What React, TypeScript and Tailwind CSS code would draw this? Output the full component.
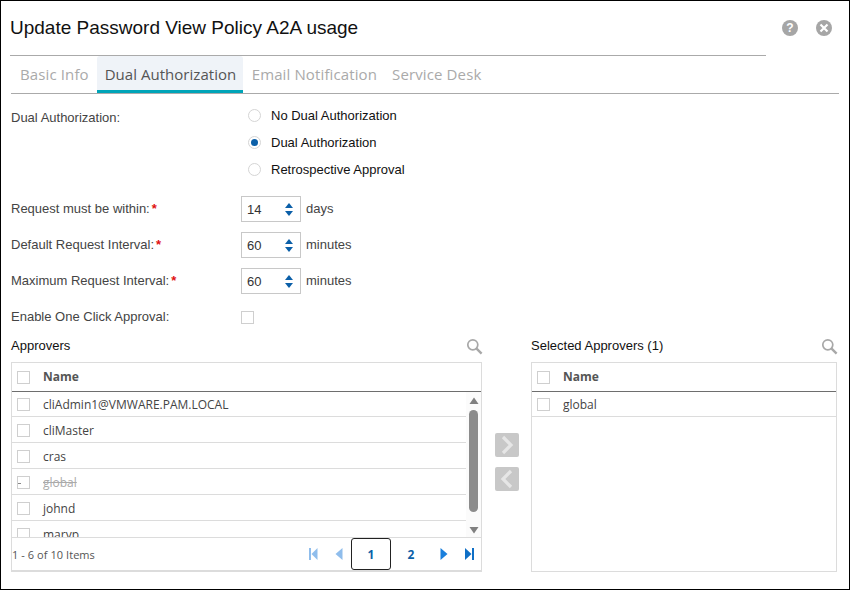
import React from "react";

const arial = "font-['Liberation_Sans',Arial,sans-serif]";
const open = "font-['Open_Sans',sans-serif]";

function Radio({ label, checked }: { label: string; checked?: boolean }) {
  return (
    <div className="flex h-[27px] items-center">
      <span className="flex h-[13px] w-[13px] items-center justify-center rounded-full border border-[#d5d5d5] bg-white">
        {checked && <span className="h-[7px] w-[7px] rounded-full bg-[#0b5fa8]" />}
      </span>
      <span className="ml-[10px] text-[13px] text-[#111]">{label}</span>
    </div>
  );
}

function Spinner({ value, unit }: { value: string; unit: string }) {
  return (
    <div className="flex items-center">
      <div className="flex h-[26px] w-[60px] items-center justify-between border border-[#c8c8c8] pl-[5px] pr-[7px] text-[13px] text-[#333]">
        <span className="pt-[1px]">{value}</span>
        <svg width="8" height="13" viewBox="0 0 8 13">
          <path d="M4 0 L8 5 H0 Z" fill="#0b5fa8" />
          <path d="M4 13 L8 8 H0 Z" fill="#0b5fa8" />
        </svg>
      </div>
      <span className="ml-[5px] text-[13px] text-[#444]">{unit}</span>
    </div>
  );
}

function Check() {
  return <span className="block h-[13px] w-[13px] shrink-0 border border-[#cfcfcf] bg-white" />;
}

function Search() {
  return (
    <svg className="-mr-px" width="17" height="17" viewBox="0 0 17 17" fill="none" stroke="#a8a8a8">
      <circle cx="6.8" cy="6.8" r="5" strokeWidth="1.7" />
      <path d="M10.6 10.6 L15.6 15.6" strokeWidth="2.4" />
    </svg>
  );
}

function FormRow({ label, required, children }: { label: string; required?: boolean; children: React.ReactNode }) {
  return (
    <div className="flex h-[26px] items-center">
      <div className="w-[230px] text-[13px] text-[#444]">
        {label}
        {required && <span className="ml-[2px] font-bold text-[#e01010]">*</span>}
      </div>
      {children}
    </div>
  );
}

function Row({ name, struck, clip, first }: { name: string; struck?: boolean; clip?: boolean; first?: boolean }) {
  const size = clip
    ? "h-[16px] items-start overflow-hidden pt-[7px]"
    : first
      ? "h-[25px] border-b border-[#dcdcdc] pt-[1px]"
      : "h-[26px] border-b border-[#dcdcdc] pt-[2px]";
  return (
    <div className={`flex items-center pl-[5px] ${size} ${open}`}>
      <div className="relative">
        <Check />
        {struck && <span className="absolute left-[1px] top-[7px] h-px w-[3px] bg-[#888]" />}
      </div>
      <span className={`ml-[13px] text-[12px] leading-[13px] ${struck ? "text-[#aaa] line-through" : "text-[#444]"}`}>{name}</span>
    </div>
  );
}

function Head() {
  return (
    <div className={`flex h-[29px] items-center border-b border-[#6e6e6e] pl-[5px] ${open}`}>
      <Check />
      <span className="ml-[13px] text-[12px] font-bold text-[#555]">Name</span>
    </div>
  );
}

function Pager() {
  return (
    <div className="flex items-center">
      <svg width="9" height="12" viewBox="0 0 9 12" fill="#8fbdec">
        <rect x="0" y="0" width="2" height="12" />
        <path d="M8.5 0 V12 L2.5 6 Z" />
      </svg>
      <svg className="ml-[17px]" width="8" height="12" viewBox="0 0 8 12" fill="#8fbdec">
        <path d="M7.5 0 V12 L0.5 6 Z" />
      </svg>
      <span className="ml-[8px] flex h-[32px] w-[40px] items-center justify-center rounded-[3px] border border-[#222] pt-[2px] text-[12px] font-bold text-[#0b5fa8]">1</span>
      <span className="flex h-[32px] w-[40px] items-center justify-center pt-[2px] text-[12px] font-bold text-[#0b5fa8]">2</span>
      <svg className="ml-[9px]" width="8" height="12" viewBox="0 0 8 12" fill="#1a7fdc">
        <path d="M0.5 0 V12 L7.5 6 Z" />
      </svg>
      <svg className="ml-[17px]" width="9" height="12" viewBox="0 0 9 12" fill="#0f6fc6">
        <path d="M0 0 V12 L6.5 6 Z" />
        <rect x="7" y="0" width="2" height="12" />
      </svg>
    </div>
  );
}

function MoveBtn({ dir }: { dir: "r" | "l" }) {
  return (
    <span className="flex h-[24px] w-[24px] items-center justify-center rounded-[2px] bg-[#c8c8c8]">
      <svg width="14" height="20" viewBox="0 0 14 20" fill="none" stroke="#e6e6e6" strokeWidth="3.2">
        <path d={dir === "r" ? "M3 2 L11 10 L3 18" : "M11 2 L3 10 L11 18"} />
      </svg>
    </span>
  );
}

export default function App() {
  return (
    <div className={`flex h-[590px] w-[850px] flex-col overflow-hidden border border-black bg-white ${arial}`}>
      <div className="flex h-[54px] items-center justify-between pl-[9px] pr-[17px]">
        <h1 className="text-[19px] text-[#111]">Update Password View Policy A2A usage</h1>
        <div className="flex items-center gap-[18px]">
          <span className="flex h-[16px] w-[16px] items-center justify-center rounded-full bg-[#a6a6a6] text-[12px] font-bold text-white">?</span>
          <span className="flex h-[16px] w-[16px] items-center justify-center rounded-full bg-[#a6a6a6]">
            <svg width="10" height="10" viewBox="0 0 10 10" stroke="#fff" strokeWidth="2.2">
              <path d="M1.5 1.5 L8.5 8.5 M8.5 1.5 L1.5 8.5" />
            </svg>
          </span>
        </div>
      </div>
      <div className="ml-[9px] h-px w-[756px] bg-[#aaaaaa]" />
      <div className={`ml-[10px] mr-[10px] flex h-[38px] items-stretch border-b border-[#aaaaaa] text-[15px] tracking-[0.12px] ${open}`}>
        <div className="flex items-center pl-[9px] pr-[8px] text-[#aaa]">Basic Info</div>
        <div className="flex w-[146px] items-center rounded-t-[3px] border-b-[3px] border-[#00a4b8] bg-[#eff3f8] pl-[8px] pt-[3px] tracking-[0.03px] text-[#555]">Dual Authorization</div>
        <div className="flex items-center pl-[9px] pr-[8px] text-[#aaa]">Email Notification</div>
        <div className="flex items-center px-[7px] text-[#aaa]">Service Desk</div>
      </div>

      <div className="flex flex-col pl-[10px] pr-[12px]">
        <div className="mt-[8px] flex">
          <div className="w-[237px] pt-[6px] text-[13px] text-[#444]">Dual Authorization:</div>
          <div className="flex flex-col">
            <Radio label="No Dual Authorization" />
            <Radio label="Dual Authorization" checked />
            <Radio label="Retrospective Approval" />
          </div>
        </div>
        <div className="mt-[13px] flex flex-col gap-[10px]">
          <FormRow label="Request must be within:" required><Spinner value="14" unit="days" /></FormRow>
          <FormRow label="Default Request Interval:" required><Spinner value="60" unit="minutes" /></FormRow>
          <FormRow label="Maximum Request Interval:" required><Spinner value="60" unit="minutes" /></FormRow>
        </div>
        <div className="mt-[10px]">
          <FormRow label="Enable One Click Approval:"><Check /></FormRow>
        </div>

        <div className="flex">
          <div className="flex w-[471px] flex-col">
            <div className="flex h-[32px] items-center justify-between">
              <span className="text-[13px] text-[#111]">Approvers</span>
              <Search />
            </div>
            <div className="flex h-[210px] flex-col border border-b-2 border-[#dcdcdc]">
              <Head />
              <div className="flex h-[145px]">
                <div className="flex-1">
                  <Row name="cliAdmin1@VMWARE.PAM.LOCAL" first />
                  <Row name="cliMaster" />
                  <Row name="cras" />
                  <Row name="global" struck />
                  <Row name="johnd" />
                  <Row name="maryp" clip />
                </div>
                <div className="flex w-[15px] flex-col items-center bg-[#fbfbfb] pt-[5px]">
                  <svg width="10" height="8" viewBox="0 0 10 8"><path d="M5 0.5 L9.5 7 H0.5 Z" fill="#808080" /></svg>
                  <div className="mt-[5px] h-[102px] w-[9px] rounded-full bg-[#8c8c8c]" />
                  <svg className="mt-[14px]" width="10" height="8" viewBox="0 0 10 8"><path d="M5 7.5 L9.5 1 H0.5 Z" fill="#808080" /></svg>
                </div>
              </div>
              <div className={`flex flex-1 items-center justify-between border-t border-[#dcdcdc] pr-[7px] text-[11px] tracking-[0.06px] text-[#555] ${open}`}>
                <span className="pt-[2px]">1 - 6 of 10 Items</span>
                <Pager />
              </div>
            </div>
          </div>

          <div className="flex w-[49px] flex-col items-center gap-[10px] pt-[103px]">
            <MoveBtn dir="r" />
            <MoveBtn dir="l" />
          </div>

          <div className="flex w-[306px] flex-col">
            <div className="flex h-[32px] items-center justify-between">
              <span className="text-[13px] text-[#111]">Selected Approvers (1)</span>
              <Search />
            </div>
            <div className="h-[210px] border border-[#dcdcdc]">
              <Head />
              <Row name="global" first />
            </div>
          </div>
        </div>
      </div>
    </div>
  );
}
